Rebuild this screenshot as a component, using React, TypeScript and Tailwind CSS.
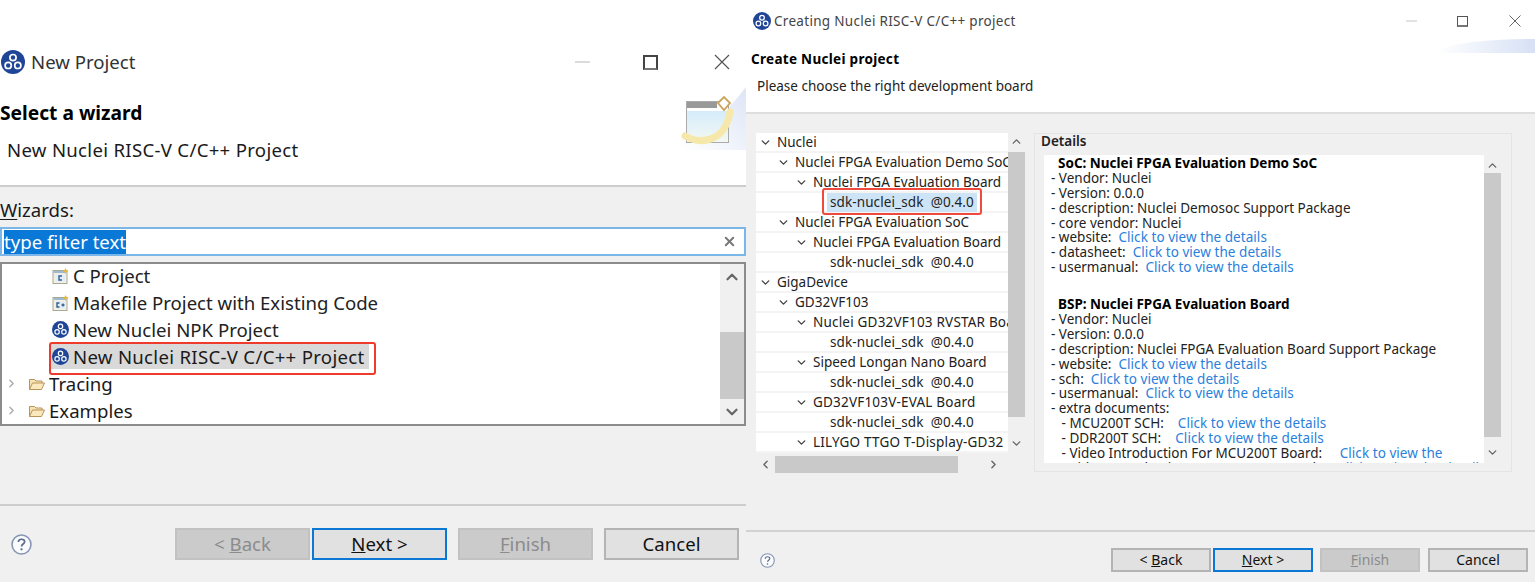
import React from "react";
import { ChevronDown, ChevronLeft, ChevronRight, ChevronUp, X } from "lucide-react";

const font = "font-['Noto_Sans','Open_Sans',sans-serif]";

function Logo({ size }: { size: number }) {
  return (
    <svg width={size} height={size} viewBox="0 0 24 24" className="shrink-0">
      <circle cx="12" cy="12" r="12" fill="#1f4597" />
      <g fill="none" stroke="#fff" strokeWidth="1.7">
        <circle cx="12" cy="7.6" r="3.1" />
        <circle cx="7.2" cy="15.4" r="3.1" />
        <circle cx="16.8" cy="15.4" r="3.1" />
      </g>
    </svg>
  );
}

function ProjectIcon({ label }: { label: string }) {
  return (
    <svg width="17" height="16" viewBox="0 0 16 16" className="shrink-0">
      <rect x="0.5" y="2.5" width="14" height="13" fill="#f5f1de" stroke="#a9a795" />
      <rect x="1" y="3" width="13" height="2" fill="#9dbad3" />
      <rect x="3" y="6" width="10" height="8" fill="#e3eef8" />
      <path d="M13 0l1 2 2 1-2 1-1 2-1-2-2-1 2-1z" fill="#e3b83c" />
      <path d={label === "C" ? "M9.5 8H6.5v4h3" : "M7 8H4.5v4H7M9 10h3M10.5 8.5v3"} fill="none" stroke="#34608c" strokeWidth="1.4" />
    </svg>
  );
}

function FolderIcon() {
  return (
    <svg width="16" height="14" viewBox="0 0 16 14" className="shrink-0">
      <path d="M0.5 12.5V2.5h5l1.5 1.5h6v2" fill="#f7e3b3" stroke="#b8935a" />
      <path d="M0.5 12.5l3-6.5h12l-3 6.5z" fill="#fbe9bd" stroke="#b8935a" />
    </svg>
  );
}

function WinControls({ big }: { big: boolean }) {
  return big ? (
    <div className="flex items-center">
      <div className="h-[2px] w-[15px] bg-[#dcdcdc]" />
      <div className="ml-[53px] size-[15px] border-2 border-[#444] border-b-[#777]" />
      <svg width="16" height="16" viewBox="0 0 16 16" className="ml-[56px]">
        <path d="M1 1l14 14M15 1L1 15" stroke="#555" strokeWidth="1.2" />
      </svg>
    </div>
  ) : (
    <div className="flex items-center">
      <div className="h-[2px] w-[11px] bg-[#e2e2e2]" />
      <div className="ml-[40px] size-[11px] border border-[#555] border-b-2 border-b-[#777]" />
      <svg width="12" height="12" viewBox="0 0 12 12" className="ml-[41px]">
        <path d="M0.5 0.5l11 11M11.5 0.5l-11 11" stroke="#666" strokeWidth="1" />
      </svg>
    </div>
  );
}

function Btn({
  children,
  kind,
  big,
}: {
  children: React.ReactNode;
  kind: "off" | "primary" | "normal";
  big: boolean;
}) {
  const size = big ? "w-[135px] h-[32px] text-[18.6px]" : "w-[100px] h-[24px] text-[14px]";
  const look =
    kind === "off"
      ? "bg-[#cbcbcb] border-[#c2c2c2] text-[#8c8c8c]"
      : kind === "primary"
        ? "bg-[#e1e1e1] border-[#0a78d4] text-[#111]"
        : "bg-[#e1e1e1] border-[#b4b4b4] text-[#111]";
  return (
    <div className={`flex shrink-0 items-center justify-center whitespace-pre border-2 leading-none ${size} ${look}`}>
      {children}
    </div>
  );
}

function HelpIcon({ size }: { size: number }) {
  return (
    <svg width={size} height={size} viewBox="0 0 20 20" className="shrink-0">
      <circle cx="10" cy="10" r="9" fill="#fafbfd" stroke="#8695b3" strokeWidth="1.5" />
      <path d="M7 7.6C7 5.8 8.4 5 10 5s3 .9 3 2.4c0 2.1-3 2.2-3 4.4" fill="none" stroke="#5a6b8c" strokeWidth="1.6" />
      <circle cx="10" cy="14.6" r="1.1" fill="#5a6b8c" />
    </svg>
  );
}

const wizardRows = [
  { icon: <ProjectIcon label="C" />, text: "C Project" },
  { icon: <ProjectIcon label="C++" />, text: "Makefile Project with Existing Code" },
  { icon: <Logo size={17} />, text: "New Nuclei NPK Project" },
];

function LeftPanel() {
  return (
    <div className="flex h-full w-[746px] shrink-0 flex-col bg-[#f0f0f0] text-[18.6px] text-[#1a1a1a]">
      <header className="relative h-[187px] shrink-0 border-b-2 border-[#cdcdcd] bg-white">
        <div className="mt-[44px] flex h-[36px] items-center pr-[16px]">
          <div className="ml-[1px] flex items-center gap-[6px]">
            <Logo size={24} />
            <span className="text-[#333]">New Project</span>
          </div>
          <div className="ml-auto">
            <WinControls big />
          </div>
        </div>
        <div className="mt-[19px] h-[28px] text-[19.2px] font-bold leading-[28px] text-black">Select a wizard</div>
        <div className="mt-[9px] h-[28px] pl-[7px] leading-[28px] tracking-[0.3px]">New Nuclei RISC-V C/C++ Project</div>
        <svg width="66" height="64" viewBox="0 0 66 64" className="absolute left-[680px] top-[87px]">
          <defs>
            <linearGradient id="bgl" x1="0" y1="1" x2="1" y2="0">
              <stop offset="0" stopColor="#fff" />
              <stop offset="1" stopColor="#dde5f6" />
            </linearGradient>
            <linearGradient id="win" x1="0" y1="0" x2="0" y2="1">
              <stop offset="0" stopColor="#d5ecfb" />
              <stop offset="1" stopColor="#f3f8f2" />
            </linearGradient>
          </defs>
          <path d="M0 63V52C30 44 50 20 66 0V63z" fill="url(#bgl)" />
          <rect x="6.500" y="14.500" width="42" height="41" fill="#fff" stroke="#aaa" />
          <rect x="7" y="15" width="30" height="6" fill="#999" />
          <rect x="7" y="24" width="41" height="31" fill="url(#win)" />
          <path d="M5 49c16 9 40 6 45-24" fill="none" stroke="#f6e8ab" strokeWidth="7" strokeLinecap="round" />
          <path d="M38 16l6-6 6 6-6 7z" fill="#fff" stroke="#caa45a" strokeWidth="1.8" />
        </svg>
      </header>

      <div className="mt-[9px] h-[28px] leading-[28px]">
        <span className="underline underline-offset-2">W</span>izards:
      </div>

      <div className="mt-[3px] flex h-[29px] items-center border-2 border-[#7ab6e8] bg-white pl-[2px] pr-[7px]">
        <span className="bg-[#0a78d7] leading-[24px] text-white">type filter text</span>
        <X size={15} strokeWidth={3} className="ml-auto text-[#777]" />
      </div>

      <div className="mt-[6px] flex h-[164px] overflow-hidden border-2 border-[#8c8c8c] bg-white">
        <div className="-mt-[2px] min-w-0 flex-1">
          {wizardRows.map((r) => (
            <div key={r.text} className="flex h-[27px] items-center gap-[4px] pl-[50px] text-[#222]">
              {r.icon}
              <span>{r.text}</span>
            </div>
          ))}
          <div className="relative flex h-[27px] items-center pl-[48px]">
            <div className="flex h-[25px] items-center gap-[4px] bg-[#d9d9d9] pl-[2px] pr-[4px]">
              <Logo size={17} />
              <span className="tracking-[0.3px]">New Nuclei RISC-V C/C++ Project</span>
            </div>
            <div className="absolute left-[47px] top-[-1px] h-[33px] w-[327px] rounded-[3px] border-2 border-[#ef3b2d]" />
          </div>
          {["Tracing", "Examples"].map((t) => (
            <div key={t} className="flex h-[27px] items-center pl-[3px]">
              <ChevronRight size={13} strokeWidth={2.5} className="text-[#aaa]" />
              <div className="ml-[11px] mr-[4px]">
                <FolderIcon />
              </div>
              <span>{t}</span>
            </div>
          ))}
        </div>
        <div className="flex w-[24px] shrink-0 flex-col items-center bg-[#f0f0f0]">
          <ChevronUp size={18} strokeWidth={3} className="mt-[4px] text-[#666]" />
          <div className="mt-[46px] h-[67px] w-full bg-[#c9c9c9]" />
          <ChevronDown size={18} strokeWidth={3} className="mt-[4px] text-[#666]" />
        </div>
      </div>

      <div className="mt-[78px] h-[2px] shrink-0 bg-[#cdcdcd]" />
      <div className="mt-[22px] flex items-center pl-[11px]">
        <HelpIcon size={21} />
        <div className="ml-[143px] flex">
          <Btn kind="off" big>
            {"< "}
            <u>B</u>ack
          </Btn>
          <div className="ml-[2px]">
            <Btn kind="primary" big>
              <u>N</u>ext {">"}
            </Btn>
          </div>
          <div className="ml-[11px]">
            <Btn kind="off" big>
              <u>F</u>inish
            </Btn>
          </div>
          <div className="ml-[11px]">
            <Btn kind="normal" big>
              Cancel
            </Btn>
          </div>
        </div>
      </div>
    </div>
  );
}

const boardRows: [number, string, boolean?][] = [
  [0, "Nuclei"],
  [1, "Nuclei FPGA Evaluation Demo SoC"],
  [2, "Nuclei FPGA Evaluation Board"],
  [3, "sdk-nuclei_sdk  @0.4.0", true],
  [1, "Nuclei FPGA Evaluation SoC"],
  [2, "Nuclei FPGA Evaluation Board"],
  [3, "sdk-nuclei_sdk  @0.4.0"],
  [0, "GigaDevice"],
  [1, "GD32VF103"],
  [2, "Nuclei GD32VF103 RVSTAR Board"],
  [3, "sdk-nuclei_sdk  @0.4.0"],
  [2, "Sipeed Longan Nano Board"],
  [3, "sdk-nuclei_sdk  @0.4.0"],
  [2, "GD32VF103V-EVAL Board"],
  [3, "sdk-nuclei_sdk  @0.4.0"],
  [2, "LILYGO TTGO T-Display-GD32"],
];

const indentClass = ["pl-[3px]", "pl-[21px]", "pl-[39px]", "pl-[57px]"];
const wideRows = ["Nuclei GD32VF103 RVSTAR Board", "GD32VF103V-EVAL Board", "LILYGO TTGO T-Display-GD32"];

function BoardTree() {
  return (
    <div className="w-[269px] shrink-0">
      <div className="flex h-[320px]">
        <div className="w-[252px] shrink-0 overflow-hidden">
          {boardRows.map(([lvl, text, sel], i) => (
            <div
              key={i}
              className={`relative flex h-[20px] items-center whitespace-pre border-b-2 border-[#f4f4f4] bg-white ${indentClass[lvl]}`}
            >
              {lvl < 3 ? (
                <ChevronDown size={13} strokeWidth={2.6} className="mr-[5px] shrink-0 text-[#444]" />
              ) : (
                <span className="w-[17px] shrink-0" />
              )}
              {sel ? (
                <>
                  <span className="-ml-[3px] bg-[#cde4f7] px-[3px] leading-[19px] tracking-[0.1px]">{text}</span>
                  <div className="absolute left-[66px] top-[-5px] z-10 h-[27px] w-[160px] rounded-[3px] border-2 border-[#ee4a3d]" />
                </>
              ) : (
                <span className={wideRows.includes(text) ? "tracking-[0.2px]" : lvl === 3 ? "tracking-[0.1px]" : ""}>
                  {text}
                </span>
              )}
            </div>
          ))}
        </div>
        <div className="flex w-[17px] shrink-0 flex-col items-center">
          <ChevronUp size={13} strokeWidth={2.6} className="mt-[2px] text-[#666]" />
          <div className="mt-[4px] h-[265px] w-full bg-[#c9c9c9]" />
          <ChevronDown size={13} strokeWidth={2.6} className="mt-[20px] text-[#666]" />
        </div>
      </div>
      <div className="mt-[3px] flex h-[17px] w-[252px] items-center">
        <ChevronLeft size={13} strokeWidth={2.6} className="ml-[3px] text-[#666]" />
        <div className="ml-[3px] h-full w-[183px] bg-[#c9c9c9]" />
        <ChevronRight size={13} strokeWidth={2.6} className="ml-[29px] text-[#666]" />
      </div>
    </div>
  );
}

type Line = { t: string; link?: string; bold?: boolean; gap?: boolean };
const detailLines: Line[] = [
  { t: "SoC: Nuclei FPGA Evaluation Demo SoC", bold: true },
  { t: "- Vendor: Nuclei" },
  { t: "- Version: 0.0.0" },
  { t: "- description: Nuclei Demosoc Support Package" },
  { t: "- core vendor: Nuclei" },
  { t: "- website:  ", link: "Click to view the details" },
  { t: "- datasheet:  ", link: "Click to view the details" },
  { t: "- usermanual:  ", link: "Click to view the details" },
  { t: "BSP: Nuclei FPGA Evaluation Board", bold: true, gap: true },
  { t: "- Vendor: Nuclei" },
  { t: "- Version: 0.0.0" },
  { t: "- description: Nuclei FPGA Evaluation Board Support Package" },
  { t: "- website:  ", link: "Click to view the details" },
  { t: "- sch:  ", link: "Click to view the details" },
  { t: "- usermanual:  ", link: "Click to view the details" },
  { t: "- extra documents:" },
  { t: "   - MCU200T SCH:    ", link: "Click to view the details" },
  { t: "   - DDR200T SCH:    ", link: "Click to view the details" },
  { t: "   - Video Introduction For MCU200T Board:     ", link: "Click to view the" },
  { t: "   - Video Introduction For DDR200T Board:     ", link: "Click to view the details" },
];

function DetailsBox() {
  return (
    <div className="ml-[9px] flex h-[339px] w-[478px] shrink-0 flex-col border border-[#e4e4e4]">
      <div className="h-[21px] pl-[6px] text-[13.5px] font-semibold leading-[15px] text-[#222]">Details</div>
      <div className="flex h-[308px] pl-[9px]">
        <div className="w-[440px] overflow-hidden bg-white pl-[7px] pt-[1px] leading-[14.9px] text-[#222]">
          {detailLines.map((l, i) => (
            <div
              key={i}
              className={`h-[14.9px] whitespace-pre ${l.bold ? "font-bold text-black" : ""} ${l.bold && i === 0 ? "pl-[7px]" : ""} ${l.gap ? "mt-[22px] pl-[7px]" : ""}`}
            >
              {l.t}
              {l.link ? <span className="text-[#2a7fdc] tracking-[0.05px]">{l.link}</span> : null}
            </div>
          ))}
        </div>
        <div className="flex w-[17px] shrink-0 flex-col items-center">
          <ChevronUp size={13} strokeWidth={2.6} className="mt-[4px] text-[#666]" />
          <div className="mt-[1px] h-[264px] w-full bg-[#c9c9c9]" />
          <ChevronDown size={13} strokeWidth={2.6} className="mt-[9px] text-[#666]" />
        </div>
      </div>
    </div>
  );
}

function RightPanel() {
  return (
    <div className="flex h-full min-w-0 flex-1 flex-col bg-[#f0f0f0] text-[13.5px] text-[#222]">
      <header className="relative h-[114px] shrink-0 border-b-2 border-[#dedede] bg-white">
        <div className="mt-[9px] flex h-[24px] items-center pr-[14px]">
          <div className="ml-[7px] flex items-center gap-[3px]">
            <Logo size={18} />
            <span className="tracking-[0.3px] text-[#444]">Creating Nuclei RISC-V C/C++ project</span>
          </div>
          <div className="ml-auto">
            <WinControls big={false} />
          </div>
        </div>
        <div className="mt-[16px] h-[20px] pl-[5px] font-bold leading-[20px] tracking-[0.3px] text-black">
          Create Nuclei project
        </div>
        <div className="mt-[7px] h-[20px] pl-[11px] leading-[20px]">Please choose the right development board</div>
        <div className="absolute right-0 top-[39px] h-[14px] w-[98px] rounded-tl-[100%] bg-gradient-to-r from-white to-[#d7e0f5]" />
      </header>
      <div className="mt-[19px] flex h-[340px] shrink-0 pl-[10px]">
        <BoardTree />
        <DetailsBox />
      </div>
      <div className="mt-[57px] h-[2px] shrink-0 bg-[#d2d2d2]" />
      <div className="mt-[16px] flex items-center pl-[14px]">
        <HelpIcon size={15} />
        <div className="ml-[336px] flex">
          <Btn kind="normal" big={false}>
            {"< "}
            <u>B</u>ack
          </Btn>
          <div className="ml-[2px]">
            <Btn kind="primary" big={false}>
              <u>N</u>ext {">"}
            </Btn>
          </div>
          <div className="ml-[7px]">
            <Btn kind="off" big={false}>
              <u>F</u>inish
            </Btn>
          </div>
          <div className="ml-[8px]">
            <Btn kind="normal" big={false}>
              Cancel
            </Btn>
          </div>
        </div>
      </div>
    </div>
  );
}

export default function App() {
  return (
    <div className={`flex h-[582px] w-[1535px] overflow-hidden ${font}`}>
      <LeftPanel />
      <RightPanel />
    </div>
  );
}
